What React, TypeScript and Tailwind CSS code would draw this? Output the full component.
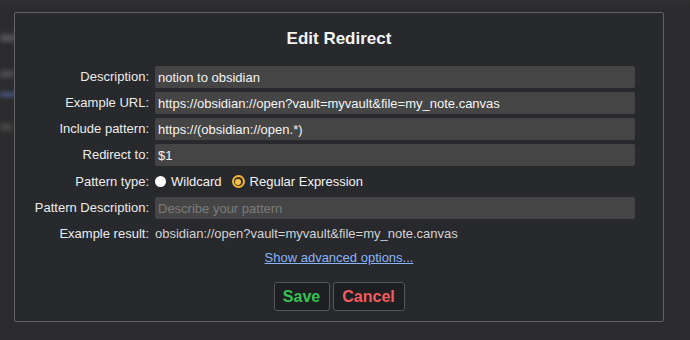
import React from "react";

const ROWS = [
  { label: "Description:", value: "notion to obsidian" },
  { label: "Example URL:", value: "https://obsidian://open?vault=myvault&file=my_note.canvas" },
  { label: "Include pattern:", value: "https://(obsidian://open.*)" },
  { label: "Redirect to:", value: "$1" },
];

function Label({ children }: { children: React.ReactNode }) {
  return <div className="text-right text-[13px] leading-[22px] text-[#ececec] whitespace-nowrap">{children}</div>;
}

function Radio({ checked, label }: { checked?: boolean; label: string }) {
  return (
    <label className="flex items-center gap-[5px]">
      {checked ? (
        <span className="w-[13px] h-[13px] rounded-full bg-[#f4b93a] flex items-center justify-center">
          <span className="w-[9px] h-[9px] rounded-full bg-[#3a3220] flex items-center justify-center">
            <span className="w-[6px] h-[6px] rounded-full bg-[#f6c24a]" />
          </span>
        </span>
      ) : (
        <span className="w-[11px] h-[11px] rounded-full bg-white ml-[2px]" />
      )}
      <span className="text-[13px] text-[#f2f2f2]">{label}</span>
    </label>
  );
}

export default function App() {
  return (
    <div className="relative w-[690px] h-[340px] bg-[#2c2c2e] overflow-hidden" style={{ fontFamily: '"Liberation Sans", Arial, sans-serif' }}>
      {/* page behind the modal */}
      <div className="border-t-[4px] border-[#353537] pt-[30px] flex flex-col blur-[2px]">
        <div className="w-[16px] h-[8px] bg-[#505052]" />
        <div className="w-[14px] h-[8px] bg-[#4a4a4c] mt-[28px]" />
        <div className="w-[16px] h-[5px] bg-[#45537a] mt-[14px]" />
        <div className="w-[12px] h-[8px] bg-[#444446] mt-[26px]" />
      </div>

      {/* modal */}
      <div className="absolute left-[14px] top-[12px] w-[650px] h-[310px] bg-[#28292d] border border-[#636366] rounded-[2px] pt-[16px]">
        <h2 className="text-center text-[17px] leading-[20px] font-bold text-[#f4f4f4]">Edit Redirect</h2>

        <div className="mt-[17px] pl-[10px] pr-[28px] grid grid-cols-[124px_1fr] gap-x-[6px] gap-y-[4px]">
          {ROWS.map((r) => (
            <React.Fragment key={r.label}>
              <Label>{r.label}</Label>
              <input
                readOnly
                value={r.value}
                className="h-[22px] bg-[#454545] rounded-[2px] px-[3px] text-[13px] text-[#f4f4f4] outline-none"
              />
            </React.Fragment>
          ))}

          <div className="pt-[1px]">
            <Label>Pattern type:</Label>
          </div>
          <div className="pt-[1px] h-[22px] flex items-center gap-[10px] -ml-[2px]">
            <Radio label="Wildcard" />
            <Radio checked label="Regular Expression" />
          </div>

          <Label>Pattern Description:</Label>
          <input
            readOnly
            placeholder="Describe your pattern"
            className="h-[22px] bg-[#454545] rounded-[2px] px-[3px] text-[13px] text-[#f4f4f4] placeholder:text-[#7b7b7b] outline-none"
          />

          <Label>Example result:</Label>
          <div className="text-[13px] leading-[22px] text-[#d2d2d2]">
            obsidian://open?vault=myvault&file=my_note.canvas
          </div>
        </div>

        <div className="mt-[4px] text-center leading-[16px]">
          <a href="#" className="text-[13px] leading-[16px] text-[#8ab4f8] underline">
            Show advanced options...
          </a>
        </div>

        <div className="mt-[16px] flex justify-center gap-[3px]">
          <button className="h-[29px] w-[56px] bg-[#1e1f22] border border-[#56575a] rounded-[3px] text-[16px] leading-[20px] font-bold text-[#36c253]">
            Save
          </button>
          <button className="h-[29px] w-[72px] bg-[#1e1f22] border border-[#56575a] rounded-[3px] text-[16px] leading-[20px] font-bold text-[#f25c5c]">
            Cancel
          </button>
        </div>
      </div>
    </div>
  );
}
